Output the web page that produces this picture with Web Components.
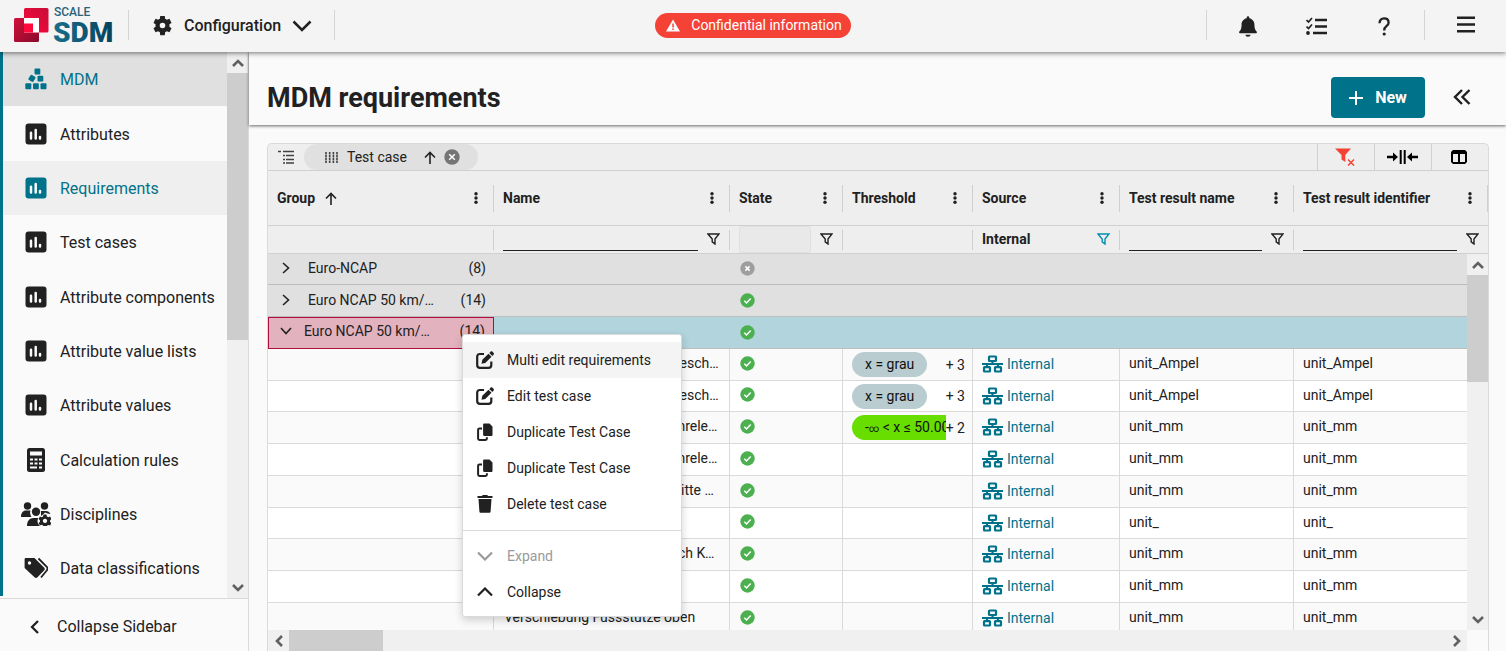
<!DOCTYPE html>
<html lang="en">
<head>
<meta charset="utf-8">
<meta name="viewport" content="width=device-width, initial-scale=1">
<title>SCALE.sdm - MDM requirements</title>
<style>
  :root {
    --teal: #00728a;
    --ink: #212121;
    --line: #dadada;
    --surface: #fafafa;
  }
  html, body { height: 100%; margin: 0; }
  body {
    font: 14px/20px Roboto, "Liberation Sans", sans-serif;
    color: var(--ink);
    background: var(--surface);
    overflow: hidden;
  }
</style>
</head>
<body>
<sdm-app></sdm-app>

<script>
const define = (name, markup, setup) => {
  const template = document.createElement('template');
  template.innerHTML = markup;
  customElements.define(name, class extends HTMLElement {
    constructor() {
      super();
      this.attachShadow({ mode: 'open' }).append(template.content.cloneNode(true));
    }
    connectedCallback() {
      if (setup) setup(this, this.shadowRoot);
    }
  });
};

/* ---------- icons: [width, height, markup] ---------- */
const check = '<path d="M4.3 7.8l2.2 2.1 4.2-4.3" fill="none" stroke="#fff" stroke-width="1.5"/>';
const person = (x, y, r) => `<circle cx="${x}" cy="${y}" r="${r}"/>`;
const ICONS = {
  gear: [24, 24, '<path fill-rule="evenodd" d="M12 15.2A3.2 3.2 0 0 1 8.800 12 3.200 3.200 0 0 1 12 8.800 3.200 3.200 0 0 1 15.200 12 3.200 3.200 0 0 1 12 15.200M19.900 13.300C20 12.400 20 11.600 19.900 10.700L22.300 9 20 4.300 17 5.400C16.400 4.900 15.700 4.500 15 4.200L14.600 1H9.400L9 4.200C8.300 4.500 7.600 4.900 7 5.400L4 4.300 1.700 9 4.100 10.700C4 11.600 4 12.400 4.100 13.300L1.700 15 4 19.700 7 18.600C7.600 19.100 8.300 19.500 9 19.800L9.400 23H14.600L15 19.800C15.700 19.500 16.400 19.100 17 18.600L20 19.700 22.300 15z"/>'],
  down: [20, 12, '<path d="M1.500 1.500L10 10 18.500 1.500" fill="none" stroke="currentColor" stroke-width="2.500"/>'],
  warn: [14, 13, '<path d="M7 0.500L14 12.500H0z"/><path d="M6.300 4.500h1.500v4H6.300zM6.300 9.500h1.500V11H6.300z" fill="#f44336"/>'],
  bell: [448, 512, '<path d="M224 512c35.320 0 63.970-20 63.970-48H160.030c0 28 28.650 48 63.970 48zm215.390-129.710c-19.320-20.760-55.470-51.990-55.470-174.290 0-77.700-54.480-139.900-127.940-155.160V32c0-17.670-14.320-32-31.980-32s-31.980 14.330-31.980 32v20.840C118.560 68.100 64.080 130.300 64.080 208c0 122.300-36.150 153.530-55.470 174.290C-4 398 2 424 22 424h404c20 0 26-26 13.390-41.710z"/>'],
  tasks: [21, 18, '<path d="M9 3h12M9 9.500h12M7 16h14" stroke="currentColor" stroke-width="2.300"/><path d="M.5 3l2 2L6 1M.5 9.500l2 2L6 7.500" fill="none" stroke="currentColor" stroke-width="1.700"/><circle cx="2" cy="16" r="1.900"/>'],
  help: [12, 19, '<path d="M1.500 6.200C1.500 3 3.500 1.400 6 1.400s4.600 1.500 4.600 4.300C10.600 9.200 6.200 8.800 6.200 13.400" fill="none" stroke="currentColor" stroke-width="2.300"/><circle cx="6.200" cy="17" r="1.600"/>'],
  menu: [18, 17, '<path d="M0 1.700h18M0 8.500h18M0 15.200h18" stroke="currentColor" stroke-width="2.400"/>'],
  plus: [14, 14, '<path d="M7 0v14M0 7h14" stroke="currentColor" stroke-width="2"/>'],
  first: [18, 16, '<path d="M9 1L2 8l7 7M16.500 1l-7 7 7 7" fill="none" stroke="currentColor" stroke-width="2.400"/>'],
  mdm: [22, 22, '<rect x="9.500" y="0.500" width="5.800" height="6" rx="1"/><rect x="4" y="7.500" width="5.800" height="5.800" rx="1.200" transform="rotate(32 7 10.500)"/><rect x="12.500" y="7.700" width="5.800" height="5.800" rx="1"/><rect x="0.300" y="15.300" width="6" height="6" rx="1"/><rect x="8" y="15.300" width="5.800" height="6" rx="1"/><rect x="15.500" y="15.300" width="6" height="6" rx="1"/>'],
  chart: [22, 22, '<rect x="0.500" y="0.500" width="21" height="21" rx="3"/><path d="M6 9.700v5.800M10.700 7v8.500M15 14v1.500" stroke="#fafafa" stroke-width="2.500" stroke-linecap="round"/>'],
  calc: [18, 24, '<rect width="18" height="24" rx="2.500"/><path d="M3 3.500h12v4H3zM3 10.500h3v2H3zM7.500 10.500h3v2h-3zM12 10.500h3v2h-3zM3 14.500h3v2H3zM7.500 14.500h3v2h-3zM12 14.500h3v2h-3zM3 18.500h7v2H3zM12 18.500h3v2h-3z" fill="#fafafa"/>'],
  people: [30, 24, `${person(6.500, 4, 3.700)}${person(23.500, 4, 3.700)}<path d="M0 15c0-4 2-6.500 5-6.500h4.500c-1 2 0 5 1 6.500zM20 9h5c2 0 3.500 1 4.500 3l-3-.5-2.500-1-2 2-2 1.500z"/>${person(15, 9.800, 4.200)}<path d="M6 24c0-5 2.500-8 6.500-8h5c-1.500 2-1.500 5 1.500 8z"/><path fill-rule="evenodd" d="M22.500 12.500h3l.4 1.900 1.400.8 1.800-.7 1.300 2.600-1.400 1.300v1.400l1.400 1.200-1.300 2.500-1.900-.6-1.300.8-.4 1.600h-3l-.4-1.700-1.400-.8-1.800.6-1.300-2.400 1.400-1.300v-1.300l-1.400-1.300 1.300-2.500 1.800.6 1.400-.8zM24 16.800a2.100 2.100 0 1 0 .01 0z"/>`],
  tags: [24, 22, '<path fill-rule="evenodd" d="M2 1h8.500L20 10.500c1 1 1 2 0 3l-6.500 6.800c-1 1-2 1-3 0L.6 11V2.500C.6 1.500 1 1 2 1zM5.500 4.300a1.700 1.700 0 1 0 .01 0z"/><path d="M14.500 1.500l8 8c1.200 1.300 1.200 3 0 4.300L17 20.500" fill="none" stroke="currentColor" stroke-width="1.800"/>'],
  back: [9, 14, '<path d="M8 1L2 7l6 6" fill="none" stroke="currentColor" stroke-width="2.300"/>'],
  group: [16, 14, '<path d="M0 1.500h3M5 1.500h11M5 5.500h2M8 5.500h8M5 9.500h2M8 9.500h8M5 13h2M8 13h8" stroke="#424242" stroke-width="1.500"/>'],
  grip: [13, 11, '<path d="M1 0v11M4.700 0v11M8.400 0v11M12 0v11" stroke="#424242" stroke-width="1.600" stroke-dasharray="2.400 .6"/>'],
  up: [12, 13, '<path d="M6 13V1.500M1 6.500l5-5 5 5" fill="none" stroke="currentColor" stroke-width="1.600"/>'],
  clear: [16, 16, '<circle cx="8" cy="8" r="7.700" fill="#757575"/><path d="M5.200 5.200l5.600 5.600M10.800 5.200l-5.600 5.600" stroke="#fff" stroke-width="1.500"/>'],
  unfilter: [20, 18, '<path d="M0 .5h16L10.300 7v7L6.500 11.500V7z" fill="#f44336"/><path d="M13 11.500l6 6M19 11.500l-6 6" stroke="#f44336" stroke-width="1.500"/>'],
  fit: [31, 14, '<path d="M0 7h9M31 7h-9" stroke="#000" stroke-width="2.400"/><path d="M6 2.500l5 4.500-5 4.500zM25 2.500L20 7l5 4.500z" fill="#000"/><path d="M13.700 0v14M17.700 0v14" stroke="#000" stroke-width="2"/>'],
  columns: [16, 14, '<path fill="#000" fill-rule="evenodd" d="M2 0h12l2 2v10l-2 2H2l-2-2V2zM2 4v8h5V4zM9 4v8h5V4z"/>'],
  dots: [4, 12, '<circle cx="2" cy="1.800" r="1.700"/><circle cx="2" cy="6" r="1.700"/><circle cx="2" cy="10.200" r="1.700"/>'],
  filter: [13, 12, '<path d="M1 1h11L8 6v5L5.200 8.800V6z" fill="none" stroke="currentColor" stroke-width="1.400"/>'],
  right: [8, 12, '<path d="M1 1l5.500 5L1 11" fill="none" stroke="currentColor" stroke-width="1.600"/>'],
  open: [12, 8, '<path d="M1 1l5 5.500L11 1" fill="none" stroke="currentColor" stroke-width="1.600"/>'],
  ok: [15, 15, `<circle cx="7.500" cy="7.500" r="7.200" fill="#4caf50"/>${check}`],
  off: [15, 15, '<circle cx="7.500" cy="7.500" r="7.200" fill="#9e9e9e"/><path d="M5.400 5.400l4.200 4.200M9.600 5.400L5.400 9.600" stroke="#fff" stroke-width="1.500"/>'],
  tree: [21, 18, '<g fill="none" stroke="currentColor" stroke-width="2.200"><rect x="7" y="1.500" width="7" height="4.500" rx=".5"/><rect x="2" y="12.200" width="6" height="4.300" rx=".5"/><rect x="13" y="12.200" width="6" height="4.300" rx=".5"/><path d="M0 9h21M10.500 6v3M5 9v3M16 9v3"/></g>'],
  edit: [18, 18, '<path d="M8 3H4C2 3 1.200 4 1.200 5.500v8.500c0 2 1 2.800 2.800 2.800h8.500c2 0 2.800-1 2.800-2.800v-3.500" fill="none" stroke="currentColor" stroke-width="2.200"/><path d="M5.500 12.800l.8-4L12.500 2.700l3 3-6.200 6.300zM13.300 1.900l1.200-1.200c.6-.6 1.400-.6 2 0l1 1c.6.600.6 1.400 0 2l-1.200 1.200z"/>'],
  copy: [16, 18, '<path d="M7.300.5h5.200L15.500 3.500v8.300c0 .8-.5 1.200-1.200 1.200h-7c-.8 0-1.200-.5-1.200-1.200v-10c0-.8.5-1.300 1.200-1.300z"/><path d="M5 5.500H2.500c-.9 0-1.400.5-1.400 1.300v8.800c0 .9.500 1.400 1.400 1.400h6c.9 0 1.400-.5 1.400-1.400v-1.300" fill="none" stroke="currentColor" stroke-width="2"/>'],
  trash: [16, 18, '<path d="M.5 1h4.500l.7-1h4.600l.7 1h4.500v2H.5zM1.500 4h13l-.9 12.500c0 .8-.6 1.300-1.300 1.300H3.700c-.7 0-1.300-.5-1.300-1.300z"/>'],
  expand: [16, 10, '<path d="M1 1.500L8 8.500l7-7" fill="none" stroke="currentColor" stroke-width="2.200"/>'],
  collapse: [16, 10, '<path d="M1 8.500l7-7 7 7" fill="none" stroke="currentColor" stroke-width="2.200"/>'],
  arrow: [12, 8, '<path d="M1 7l5-5 5 5" fill="none" stroke="#606060" stroke-width="2.600"/>']
};

define('sdm-icon', `
  <style>:host { display: inline-flex; flex: none; } svg { display: block; fill: currentColor; }</style>
`, (host, root) => {
  const [w, h, body] = ICONS[host.getAttribute('name')];
  const width = +host.getAttribute('width') || w;
  root.querySelector('svg')?.remove();
  root.querySelector('style').insertAdjacentHTML('afterend',
    `<svg aria-hidden="true" width="${width}" height="${Math.round(width * h / w)}" viewBox="0 0 ${w} ${h}">${body}</svg>`);
});

/* ---------- scroll bar, vertical unless "horizontal" is set ---------- */
define('sdm-scrollbar', `
  <style>
    :host { display: flex; flex-direction: column; flex: none; width: 21px; background: #f0f0f0; }
    :host([horizontal]) { flex-direction: row; width: auto; height: 21px; }
    .end { display: flex; flex: none; width: 21px; height: 21px; align-items: center; justify-content: center; }
    .thumb { flex: none; background: #cdcdcd; height: var(--thumb); }
    :host([horizontal]) .thumb { height: auto; width: var(--thumb); }
    .rest { flex: 1; }
    .next sdm-icon { transform: rotate(180deg); }
    :host([horizontal]) .prev sdm-icon { transform: rotate(-90deg); }
    :host([horizontal]) .next sdm-icon { transform: rotate(90deg); }
  </style>
  <div class="end prev"><sdm-icon name="arrow"></sdm-icon></div>
  <div class="thumb"></div><div class="rest"></div>
  <div class="end next"><sdm-icon name="arrow"></sdm-icon></div>
`);

/* ---------- top bar ---------- */
define('sdm-topbar', `
  <style>
    :host { display: grid; grid-template-columns: 1fr auto 1fr; align-items: center; height: 52px;
      background: #f4f4f4; box-shadow: 0 1px 5px rgba(0,0,0,.55); position: relative; z-index: 3; }
    .side { display: flex; align-items: center; height: 52px; }
    .end { justify-content: flex-end; }
    .rule { width: 1px; height: 30px; background: #d4d4d4; margin-bottom: 2px; }
    .logo { display: block; margin-left: 14px; margin-right: 13px; }
    button { font: inherit; color: inherit; background: none; border: 0; padding: 0; display: flex;
      align-items: center; justify-content: center; cursor: pointer; }
    .config { font-size: 16px; font-weight: 500; gap: 11px; margin: 0 22px 0 23px; }
    .config sdm-icon { margin-bottom: 1px; }
    .tool { width: 68px; height: 52px; }
    .last { width: 81px; padding-bottom: 3px; }
    .pill { display: flex; align-items: center; gap: 11px; height: 25px; padding: 0 9px 0 11px; margin-bottom: 1px;
      border-radius: 13px; background: #f44336; color: #fff; line-height: 24px; }
    .pill span { padding-bottom: 1px; }
  </style>
  <div class="side">
    <svg class="logo" width="101" height="46" viewBox="14 3 101 46" role="img" aria-label="SCALE SDM">
      <defs>
        <linearGradient id="a" x1="0" y1="0" x2="1" y2="1"><stop stop-color="#d0103a"/><stop offset="1" stop-color="#8c0a2c"/></linearGradient>
        <linearGradient id="b" x1="0" y1="1" x2="1" y2="0"><stop stop-color="#ff0a3c"/><stop offset="1" stop-color="#c60c38"/></linearGradient>
        <linearGradient id="c"><stop stop-color="#1a6f8c"/><stop offset="1" stop-color="#05425c"/></linearGradient>
      </defs>
      <rect x="14" y="18" width="25" height="24" rx="1.500" fill="url(#a)"/>
      <rect x="24" y="8" width="24.500" height="24.500" rx="1.500" fill="url(#b)"/>
      <path d="M24 18h15v14.500H24z" fill="#fff"/><path d="M24 23.500h9v9h-9z" fill="#ff0a3c"/>
      <text x="54" y="16" font-size="12" font-weight="500" fill="#2a6378">SCALE</text>
      <text x="53" y="42" font-size="28" font-weight="900" fill="url(#c)">SDM</text>
    </svg>
    <span class="rule"></span>
    <button class="config"><sdm-icon name="gear" width="21"></sdm-icon>Configuration<sdm-icon name="down"></sdm-icon></button>
    <span class="rule"></span>
  </div>
  <div class="pill"><sdm-icon name="warn"></sdm-icon><span>Confidential information</span></div>
  <div class="side end">
    <span class="rule"></span>
    <span style="width:7px"></span>
    <button class="tool" aria-label="Notifications"><sdm-icon name="bell" width="18"></sdm-icon></button>
    <button class="tool" aria-label="Tasks"><sdm-icon name="tasks"></sdm-icon></button>
    <button class="tool" aria-label="Help"><sdm-icon name="help"></sdm-icon></button>
    <span style="width:6px"></span>
    <span class="rule"></span>
    <button class="last" aria-label="Menu"><sdm-icon name="menu"></sdm-icon></button>
  </div>
`);

/* ---------- sidebar ---------- */
define('sdm-nav-item', `
  <style>
    :host { display: block; height: 54px; font-size: 16px; }
    a { display: flex; align-items: center; gap: 9px; height: 100%; padding-left: 18px; color: var(--ink);
      text-decoration: none; white-space: nowrap; }
    .icon { display: flex; justify-content: center; width: 30px; }
    .label { padding-top: 2px; }
    :host([section]) a { background: #e0e0e0; color: var(--teal); }
    :host([current]) a { background: #efefef; color: var(--teal); }
  </style>
  <a href="#"><span class="icon"></span><span class="label"><slot></slot></span></a>
`, (host, root) => {
  root.querySelector('.icon').innerHTML = `<sdm-icon name="${host.getAttribute('icon')}"></sdm-icon>`;
});

define('sdm-sidebar', `
  <style>
    :host { display: flex; flex-direction: column; flex: none; width: 248px; border-right: 1px solid var(--line); background: var(--surface); }
    .scroll { flex: 1; min-height: 0; display: flex; overflow: hidden; }
    nav { flex: 1; min-width: 0; border-left: 3px solid var(--teal); margin-bottom: 2px; overflow: hidden; }
    sdm-nav-item:nth-child(3n+2) { height: 55px; }
    sdm-scrollbar { --thumb: 267px; }
    button { display: flex; align-items: center; gap: 18px; height: 53px; padding: 3px 0 0 30px; border: 0;
      border-top: 1px solid var(--line); background: none; font: inherit; font-size: 16px; color: inherit; }
  </style>
  <div class="scroll">
    <nav aria-label="MDM">
      <sdm-nav-item icon="mdm" section>MDM</sdm-nav-item>
      <sdm-nav-item icon="chart">Attributes</sdm-nav-item>
      <sdm-nav-item icon="chart" current>Requirements</sdm-nav-item>
      <sdm-nav-item icon="chart">Test cases</sdm-nav-item>
      <sdm-nav-item icon="chart">Attribute components</sdm-nav-item>
      <sdm-nav-item icon="chart">Attribute value lists</sdm-nav-item>
      <sdm-nav-item icon="chart">Attribute values</sdm-nav-item>
      <sdm-nav-item icon="calc">Calculation rules</sdm-nav-item>
      <sdm-nav-item icon="people">Disciplines</sdm-nav-item>
      <sdm-nav-item icon="tags">Data classifications</sdm-nav-item>
    </nav>
    <sdm-scrollbar></sdm-scrollbar>
  </div>
  <button><sdm-icon name="back"></sdm-icon>Collapse Sidebar</button>
`);

/* ---------- page title ---------- */
define('sdm-page-header', `
  <style>
    :host { display: flex; align-items: center; height: 73px; box-sizing: border-box;
      padding: 18px 35px 0 18px; background: var(--surface); box-shadow: 0 1px 3px rgba(0,0,0,.6); }
    h1 { margin: 0; flex: 1; font-size: 27px; line-height: 36px; font-weight: 700; }
    button { font: inherit; color: inherit; border: 0; background: none; padding: 0; display: flex; align-items: center; }
    .new { justify-content: center; gap: 12px; width: 94px; height: 41px; border-radius: 4px; background: var(--teal); color: #fff;
      font-size: 16px; font-weight: 700; margin-right: 28px; }
    .details { padding-bottom: 2px; }
  </style>
  <h1><slot></slot></h1>
  <button class="new"><sdm-icon name="plus"></sdm-icon>New</button>
  <button class="details" aria-label="Show details"><sdm-icon name="first"></sdm-icon></button>
`);

/* ---------- context menu ---------- */
define('sdm-menu-item', `
  <style>
    :host { display: block; }
    button { display: flex; align-items: center; gap: 12px; width: 100%; height: 36px; padding: 0 0 0 12px; border: 0;
      background: none; font: inherit; color: inherit; text-align: left; white-space: nowrap; }
    .icon { display: flex; width: 20px; justify-content: center; }
    :host([hover]) button { background: #f4f4f4; }
    :host([disabled]) button { color: #9a9a9a; }
  </style>
  <button role="menuitem"><span class="icon"></span><slot></slot></button>
`, (host, root) => {
  root.querySelector('.icon').innerHTML = `<sdm-icon name="${host.getAttribute('icon')}"></sdm-icon>`;
  root.querySelector('button').disabled = host.hasAttribute('disabled');
});

define('sdm-context-menu', `
  <style>
    :host { display: block; box-sizing: border-box; width: 220px; padding: 7px 0 6px; background: #fff; border: 1px solid var(--line);
      border-radius: 3px; box-shadow: 0 3px 8px rgba(0,0,0,.18); }
    hr { border: 0; border-top: 1px solid var(--line); margin: 8px 0 7px; }
  </style>
  <div role="menu">
    <sdm-menu-item icon="edit" hover>Multi edit requirements</sdm-menu-item>
    <sdm-menu-item icon="edit">Edit test case</sdm-menu-item>
    <sdm-menu-item icon="copy">Duplicate Test Case</sdm-menu-item>
    <sdm-menu-item icon="copy">Duplicate Test Case</sdm-menu-item>
    <sdm-menu-item icon="trash">Delete test case</sdm-menu-item>
    <hr>
    <sdm-menu-item icon="expand" disabled>Expand</sdm-menu-item>
    <sdm-menu-item icon="collapse">Collapse</sdm-menu-item>
  </div>
`);

/* ---------- data grid ---------- */
const GROUPS = [
  { name: 'Euro-NCAP', count: 8, state: 'off' },
  { name: 'Euro NCAP 50 km/h Frontal', count: 14, state: 'ok' },
  { name: 'Euro NCAP 50 km/h Frontal', count: 14, state: 'ok', open: true }
];
const ROWS = [
  { name: 'Ampel Kopf Fahrer a3 Kopfbeschleunigung', unit: 'unit_Ampel', range: 'x = grau', more: 3 },
  { name: 'Ampel Kopf Fahrer a3 Kopfbeschleunigung', unit: 'unit_Ampel', range: 'x = grau', more: 3 },
  { name: 'Brusteindrückung f. Insassenrelevanz', unit: 'unit_mm', range: '-∞ < x ≤ 50.00', more: 2, clip: true },
  { name: 'Brusteindrückung f. Insassenrelevanz', unit: 'unit_mm' },
  { name: 'Verschiebung Stirnwand li Mitte unten', unit: 'unit_mm' },
  { name: 'Viscous Criterion', unit: 'unit_' },
  { name: 'Verschiebung Lenksäule: nach Kopf', unit: 'unit_mm' },
  { name: 'Verschiebung Pedal', unit: 'unit_mm' },
  { name: 'Verschiebung Fussstütze oben', unit: 'unit_mm' }
];
const HEADS = ['Group', 'Name', 'State', 'Threshold', 'Source', 'Test result name', 'Test result identifier'];
const icon = (name) => `<sdm-icon name="${name}"></sdm-icon>`;
const rangeText = (s) => s.replace('<', '&lt;').replace('∞', '<small>∞</small>');

const headCells = HEADS.map((h, i) => `<th scope="col"><div class="head"><span>${h}</span>${i ? '' : icon('up')}
  <button aria-label="${h} column menu">${icon('dots')}</button></div></th>`).join('');
const filterCells = HEADS.map((h, i) => {
  if (i === 0 || i === 3) return '<td><div class="filter"></div></td>';
  const field = i === 4 ? '<strong>Internal</strong>'
    : `<input type="text" aria-label="Filter ${h}"${i === 2 ? ' disabled' : ''}>`;
  return `<td><div class="filter">${field}<button class="${i === 4 ? 'active' : ''}" aria-label="Filter menu ${h}">${icon('filter')}</button></div></td>`;
}).join('');
const groupRows = GROUPS.map((g) => `<tr class="group${g.open ? ' open' : ''}">
  <th scope="row"><div class="label">${icon(g.open ? 'open' : 'right')}<span class="name">${g.name}</span><span>(${g.count})</span></div></th>
  <td></td><td>${icon(g.state)}</td><td></td><td></td><td></td><td></td></tr>`).join('');
const dataRows = ROWS.map((r) => `<tr><td></td><td><span class="text">${r.name}</span></td><td>${icon('ok')}</td>
  <td>${r.range ? `<div class="range"><span class="clip"><span class="chip${r.clip ? ' green' : ''}">${rangeText(r.range)}</span></span><span>+ ${r.more}</span></div>` : ''}</td>
  <td><a href="#">${icon('tree')}Internal</a></td><td>${r.unit}</td><td>${r.unit}</td></tr>`).join('');

define('sdm-grid', `
  <style>
    :host { display: flex; flex-direction: column; position: relative; border: 1px solid var(--line); border-bottom: 0;
      border-radius: 5px 5px 0 0; background: #eee; }
    button { font: inherit; color: inherit; border: 0; background: none; padding: 0; display: flex; align-items: center; justify-content: center; }
    .bar { display: flex; align-items: center; height: 26px; border-bottom: 1px solid #d0d0d0; padding-left: 10px; }
    .chip-group { display: flex; align-items: center; height: 26px; box-sizing: border-box; margin-left: 10px; padding: 0 18px 0 21px;
      border-radius: 13px; background: #e0e0e0; gap: 9px; }
    .chip-group sdm-icon[name=up] { margin-left: 8px; }
    .chip-group button { margin-left: -1px; }
    .spacer { flex: 1; }
    .action { width: 57px; height: 26px; padding-right: 2px; border-left: 1px solid #d0d0d0; }
    table { width: 100%; border-collapse: separate; border-spacing: 0; table-layout: fixed; }
    td, th { padding: 0; text-align: left; font-weight: 400; box-sizing: border-box; }
    .c1 { width: 226px; } .c3 { width: 113px; } .c4 { width: 130px; } .c5 { width: 147px; } .c6 { width: 174px; } .c7 { width: 173px; }
    .top .c7 { width: 194px; }
    .top th, .top td { border-bottom: 1px solid #d0d0d0; }
    .top th { height: 55px; font-weight: 700; }
    .top td { height: 28px; }
    .head { display: flex; align-items: center; gap: 10px; height: 27px; padding-left: 9px; border-right: 1px solid #cfcfcf; white-space: nowrap; }
    .head button { width: 34px; margin-left: auto; }
    .filter { display: flex; align-items: center; height: 20px; padding-left: 9px; border-right: 1px solid #cfcfcf; }
    .top td:last-child .filter { border-right: 0; }
    .filter strong { flex: 1; font-weight: 700; padding-bottom: 2px; }
    .filter input { flex: 1; min-width: 0; height: 22px; margin: 0; padding: 0; border: 0; border-bottom: 1px solid var(--ink); background: none; font: inherit; outline: 0; box-sizing: border-box; }
    .filter input:disabled { height: 27px; border: 1px solid #e0e0e0; border-radius: 3px; background: #e9e9e9; }
    .filter button { width: 31px; padding: 0 1px 2px 0; flex: none; }
    .active { color: #0090b0; }
    .body { flex: 1; min-height: 0; display: flex; overflow: hidden; }
    .rows { flex: 1; min-width: 0; overflow: hidden; }
    .rows tr { height: 32px; }
    .rows tr:nth-child(4n+1) { height: 31px; }
    .rows td, .rows th { height: inherit; padding: 0 10px 3px 9px; border-bottom: 1px solid var(--line); border-right: 1px solid var(--line); line-height: 20px; white-space: nowrap; }
    .rows td:nth-child(2) { padding-left: 10px; }
    .rows td:nth-child(3) { padding-left: 10px; padding-bottom: 5px; }
    .rows td:last-child { border-right: 0; }
    .rows tr { background: #fff; }
    .rows tr:nth-child(even) { background: #fafafa; }
    .rows tr.group { background: #e0e0e0; }
    .rows tr.group td, .rows tr.group th { border-right: 0; border-bottom-color: #bdbdbd; padding-bottom: 3px; }
    .rows tr.group.open { background: #b1d4dd; }
    .rows tr.group th { padding: 0 8px 2px 14px; }
    .rows tr.open.group th { padding: 0 8px 4px 11px; background: #e3b2bf; border: 1px solid #b00d3c; }
    .label { display: flex; align-items: center; gap: 18px; }
    .open .label { gap: 12px; }
    .label .name { width: 131px; margin-right: auto; overflow: hidden; text-overflow: ellipsis; }
    .text { display: block; overflow: hidden; text-overflow: ellipsis; }
    .rows sdm-icon { vertical-align: middle; }
    .rows td:nth-child(4) { padding: 0 7px 0 9px; }
    .range { display: flex; align-items: center; justify-content: space-between; }
    .clip { flex: 1; min-width: 0; overflow: hidden; display: flex; }
    .chip { flex: none; height: 25px; box-sizing: border-box; line-height: 25px; padding: 0 13px; border-radius: 13px; background: #b9ccd0; color: #111; }
    .chip small { font-size: 10px; line-height: 10px; }
    .green { background: #67de00; }
    .rows a { display: flex; align-items: center; gap: 4px; color: var(--teal); text-decoration: none; }
    .rows td:nth-child(5) { padding-bottom: 1px; }
    .body sdm-scrollbar { --thumb: 107px; }
    .bottom { display: flex; background: var(--surface); }
    .bottom sdm-scrollbar { flex: 1; --thumb: 94px; margin-right: 21px; }
    sdm-context-menu { position: absolute; left: 194px; top: 190px; z-index: 2; }
  </style>
  <div class="bar">
    ${icon('group')}
    <span class="chip-group">${icon('grip')}<span>Test case</span>${icon('up')}<button aria-label="Remove grouping">${icon('clear')}</button></span>
    <span class="spacer"></span>
    <button class="action" aria-label="Clear filters">${icon('unfilter')}</button>
    <button class="action" aria-label="Fit columns">${icon('fit')}</button>
    <button class="action" aria-label="Choose columns">${icon('columns')}</button>
  </div>
  <table class="top">
    <colgroup><col class="c1"><col><col class="c3"><col class="c4"><col class="c5"><col class="c6"><col class="c7"></colgroup>
    <thead><tr>${headCells}</tr><tr>${filterCells}</tr></thead>
  </table>
  <div class="body">
    <div class="rows">
      <table aria-label="Requirements">
        <colgroup><col class="c1"><col><col class="c3"><col class="c4"><col class="c5"><col class="c6"><col class="c7"></colgroup>
        <tbody>${groupRows}${dataRows}</tbody>
      </table>
    </div>
    <sdm-scrollbar></sdm-scrollbar>
  </div>
  <div class="bottom"><sdm-scrollbar horizontal></sdm-scrollbar></div>
  <sdm-context-menu></sdm-context-menu>
`);

/* ---------- page shell ---------- */
define('sdm-app', `
  <style>
    :host { display: flex; flex-direction: column; height: 100vh; }
    .below { flex: 1; min-height: 0; display: flex; }
    main { flex: 1; min-width: 0; display: flex; flex-direction: column; }
    sdm-grid { flex: 1; min-height: 0; margin: 18px 17px 0 18px; }
  </style>
  <sdm-topbar></sdm-topbar>
  <div class="below">
    <sdm-sidebar></sdm-sidebar>
    <main>
      <sdm-page-header>MDM requirements</sdm-page-header>
      <sdm-grid></sdm-grid>
    </main>
  </div>
`);
</script>
</body>
</html>
